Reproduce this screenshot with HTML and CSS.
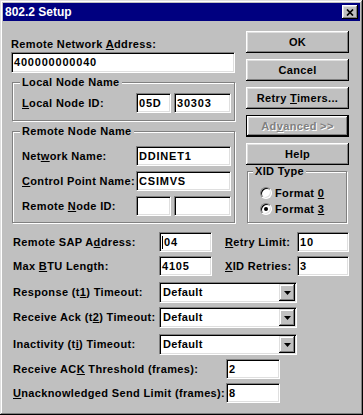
FILE: index.html
```html
<!DOCTYPE html>
<html lang="en">
<head>
    <meta charset="UTF-8">
    <title>802.2 Setup</title>
    <link rel="stylesheet" href="styles.css">
</head>
<body>
    <div class="window">
        <div class="titlebar">
            <span class="title">802.2 Setup</span>
            <span class="close">
                <svg width="8" height="7" viewBox="0 0 8 7"><path d="M1 0.5l6 6M7 0.5l-6 6" stroke="#000" stroke-width="1.7"/></svg>
            </span>
        </div>

        <div class="content">
            <div class="top">
                <div class="left">
                    <div class="caption">Remote Network <u>A</u>ddress:</div>
                    <div class="edit edit-long">400000000040</div>

                    <fieldset class="group group-local">
                        <legend>Local Node Name</legend>
                        <div class="node-grid">
                            <span class="label"><u>L</u>ocal Node ID:</span>
                            <div class="edit">05D</div>
                            <div class="edit">30303</div>
                        </div>
                    </fieldset>

                    <fieldset class="group group-remote">
                        <legend>Remote Node Name</legend>
                        <div class="node-grid">
                            <span class="label">Net<u>w</u>ork Name:</span>
                            <div class="edit span2">DDINET1</div>
                            <span class="label"><u>C</u>ontrol Point Name:</span>
                            <div class="edit span2">CSIMVS</div>
                            <span class="label">Remote <u>N</u>ode ID:</span>
                            <div class="edit"></div>
                            <div class="edit"></div>
                        </div>
                    </fieldset>
                </div>

                <div class="right">
                    <div class="buttons">
                        <div class="btn"><span>OK</span></div>
                        <div class="btn"><span>Cancel</span></div>
                        <div class="btn"><span>Retry <u>T</u>imers...</span></div>
                        <div class="btn btn-default btn-disabled"><span>Ad<u>v</u>anced &gt;&gt;</span></div>
                        <div class="btn"><span>Help</span></div>
                    </div>

                    <fieldset class="group group-xid">
                        <legend>XID Type</legend>
                        <div class="radio-row"><span class="radio"></span><span>Format <u>0</u></span></div>
                        <div class="radio-row"><span class="radio checked"></span><span>Format <u>3</u></span></div>
                    </fieldset>
                </div>
            </div>

            <div class="fields">
                <div class="row">
                    <span class="label w-main">Remote SAP A<u>d</u>dress:</span>
                    <div class="edit w-short"><span class="caret"></span>04</div>
                    <span class="label w-mid"><u>R</u>etry Limit:</span>
                    <div class="edit w-retry">10</div>
                </div>
                <div class="row">
                    <span class="label w-main">Max <u>B</u>TU Length:</span>
                    <div class="edit w-short">4105</div>
                    <span class="label w-mid"><u>X</u>ID Retries:</span>
                    <div class="edit w-retry">3</div>
                </div>
                <div class="row row-combo spaced">
                    <span class="label w-main">Response (t<u>1</u>) Timeout:</span>
                    <div class="combo"><span>Default</span><span class="drop"><svg width="7" height="4" viewBox="0 0 7 4"><path d="M0 0h7L3.5 4z"/></svg></span></div>
                </div>
                <div class="row row-combo">
                    <span class="label w-main">Receive Ack (t<u>2</u>) Timeout:</span>
                    <div class="combo"><span>Default</span><span class="drop"><svg width="7" height="4" viewBox="0 0 7 4"><path d="M0 0h7L3.5 4z"/></svg></span></div>
                </div>
                <div class="row row-combo spaced">
                    <span class="label w-main">Inactivity (t<u>i</u>) Timeout:</span>
                    <div class="combo"><span>Default</span><span class="drop"><svg width="7" height="4" viewBox="0 0 7 4"><path d="M0 0h7L3.5 4z"/></svg></span></div>
                </div>
                <div class="row">
                    <span class="label w-long">Receive AC<u>K</u> Threshold (frames):</span>
                    <div class="edit w-frames">2</div>
                </div>
                <div class="row">
                    <span class="label w-long"><u>U</u>nacknowledged Send Limit (frames):</span>
                    <div class="edit w-frames">8</div>
                </div>
            </div>
        </div>
    </div>
</body>
</html>
```

FILE: styles.css
```css
:root {
    --face: #c0c0c0;
    --shadow: #808080;
    --light: #dfdfdf;
    --navy: #000080;
}

* {
    margin: 0;
    padding: 0;
    box-sizing: border-box;
}

body {
    width: 363px;
    height: 415px;
    overflow: hidden;
    background-color: var(--face);
    color: #000;
    font-family: "Liberation Sans", Arial, sans-serif;
    font-size: 11px;
    font-weight: bold;
    letter-spacing: 0.35px;
    line-height: 13px;
}

.window {
    width: 363px;
    height: 415px;
    padding: 3px;
    background-color: var(--face);
    box-shadow: inset -1px -1px #000, inset 1px 1px var(--light),
                inset -2px -2px var(--shadow), inset 2px 2px #fff;
}

.titlebar {
    height: 18px;
    padding: 0 2px;
    background-color: var(--navy);
    color: #fff;
    display: flex;
    align-items: center;
    justify-content: space-between;
}

.title {
    font-size: 12px;
    letter-spacing: 0;
}

.close {
    width: 16px;
    height: 14px;
    background-color: var(--face);
    display: flex;
    align-items: center;
    justify-content: center;
    box-shadow: inset -1px -1px #000, inset 1px 1px #fff,
                inset -2px -2px var(--shadow), inset 2px 2px var(--light);
}

.content {
    padding: 10px 11px 0 8px;
}

.top {
    display: grid;
    grid-template-columns: 224px 103px;
    column-gap: 11px;
    align-items: start;
}

/* text fields */
.edit {
    height: 20px;
    padding: 0 3px 0 2px;
    background-color: #fff;
    border: 1px solid;
    border-color: var(--shadow) #fff #fff var(--shadow);
    box-shadow: inset 1px 1px #000, inset -1px -1px var(--light);
    display: flex;
    align-items: center;
    letter-spacing: 0.8px;
    white-space: nowrap;
    overflow: hidden;
}

.edit-long {
    height: 21px;
}

.caret {
    width: 1px;
    height: 13px;
    margin-right: 1px;
    background-color: #000;
}

.caption {
    padding-top: 7px;
    margin-bottom: 1px;
}

.label {
    white-space: nowrap;
}

/* group boxes */
.group {
    margin-left: 1px;
    border: 1px solid var(--shadow);
    box-shadow: inset 1px 1px #fff, 1px 1px #fff;
    min-width: 0;
}

.group legend {
    margin-left: -2px;
    padding: 0 2px;
    background-color: var(--face);
}

.group-local {
    margin-top: 3px;
    padding: 4px 3px 7px 9px;
}

.group-remote {
    margin-top: 4px;
    padding: 8px 3px 6px 9px;
}

.node-grid {
    display: grid;
    grid-template-columns: 111px 35px 57px;
    column-gap: 3px;
    row-gap: 5px;
    align-items: center;
}

.span2 {
    grid-column: span 2;
}

/* buttons */
.buttons {
    display: flex;
    flex-direction: column;
    gap: 6px;
}

.btn {
    height: 22px;
    background-color: var(--face);
    display: flex;
    align-items: center;
    justify-content: center;
    box-shadow: inset -1px -1px #000, inset 1px 1px #fff,
                inset -2px -2px var(--shadow), inset 2px 2px var(--light);
}

.btn-default {
    border: 1px solid #000;
}

.btn-disabled {
    color: var(--shadow);
    text-shadow: 1px 1px #fff;
}

.group-xid {
    margin: 0 2px 0 1px;
    padding: 7px 0 5px 7px;
}

.radio-row {
    height: 16px;
    margin-left: 5px;
    display: flex;
    align-items: center;
    gap: 3px;
}

.radio {
    width: 12px;
    height: 12px;
    border-radius: 50%;
    background-color: #fff;
    border: 1px solid;
    border-color: var(--shadow) #fff #fff var(--shadow);
    box-shadow: inset 1px 1px #000, inset -1px -1px var(--light);
    display: flex;
    align-items: center;
    justify-content: center;
}

.radio.checked::after {
    content: "";
    width: 4px;
    height: 4px;
    border-radius: 50%;
    background-color: #000;
}

/* lower settings */
.fields {
    margin-top: 9px;
    display: flex;
    flex-direction: column;
    gap: 4px;
}

.row {
    height: 20px;
    display: flex;
    align-items: center;
}

.row-combo {
    height: 21px;
}

.spaced {
    margin-top: 2px;
}

.row .label {
    padding-left: 2px;
    overflow: hidden;
    flex: none;
}

.w-main { width: 148px; }
.w-mid { width: 85px; padding-left: 13px !important; }
.w-long { width: 215px; }
.w-short { width: 53px; }
.w-retry { width: 52px; }
.w-frames { width: 54px; }

.combo {
    width: 138px;
    height: 21px;
    padding: 0 1px 0 3px;
    background-color: #fff;
    border: 1px solid;
    border-color: var(--shadow) #fff #fff var(--shadow);
    box-shadow: inset 1px 1px #000, inset -1px -1px var(--light);
    display: flex;
    align-items: center;
    justify-content: space-between;
}

.drop {
    width: 16px;
    height: 17px;
    background-color: var(--face);
    display: flex;
    align-items: center;
    justify-content: center;
    box-shadow: inset -1px -1px #000, inset 1px 1px var(--light),
                inset -2px -2px var(--shadow), inset 2px 2px #fff;
}
```
